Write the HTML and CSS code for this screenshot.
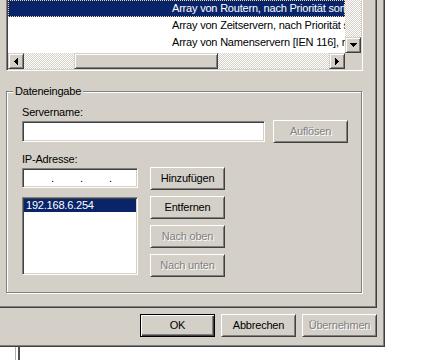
FILE: index.html
```html
<!DOCTYPE html>
<html>
<head>
    <title>Optionen</title>
    <link rel="stylesheet" href="styles.css">
</head>
<body>
    <div class="dialog">
        <div class="page">
            <div class="listview">
                <div class="lv-body">
                    <div class="lv-rows">
                        <div class="lv-row selected"><span>Array von Routern, nach Priorität sortiert</span></div>
                        <div class="lv-row"><span>Array von Zeitservern, nach Priorität sortiert</span></div>
                        <div class="lv-row"><span>Array von Namenservern [IEN 116], nach Priorität sortiert</span></div>
                    </div>
                    <div class="vscroll">
                        <div class="sb-track"></div>
                        <div class="sb-btn">
                            <svg width="7" height="4" viewBox="0 0 7 4"><path d="M0 0h7v1h-7zM1 1h5v1h-5zM2 2h3v1h-3zM3 3h1v1h-1z"/></svg>
                        </div>
                    </div>
                </div>
                <div class="hscroll">
                    <div class="sb-btn">
                        <svg width="4" height="7" viewBox="0 0 4 7"><path d="M3 0h1v7h-1zM2 1h1v5h-1zM1 2h1v3h-1zM0 3h1v1h-1z"/></svg>
                    </div>
                    <div class="sb-track lead"></div>
                    <div class="sb-thumb"></div>
                    <div class="sb-track rest"></div>
                    <div class="sb-btn">
                        <svg width="4" height="7" viewBox="0 0 4 7"><path d="M0 0h1v7h-1zM1 1h1v5h-1zM2 2h1v3h-1zM3 3h1v1h-1z"/></svg>
                    </div>
                    <div class="sb-corner"></div>
                </div>
            </div>

            <div class="group">
                <span class="group-title">Dateneingabe</span>
                <div class="label">Servername:</div>
                <div class="server-row">
                    <div class="field server"></div>
                    <div class="btn disabled">Auflösen</div>
                </div>
                <div class="label ip-label">IP-Adresse:</div>
                <div class="ip-block">
                    <div class="ip-col">
                        <div class="field ip">
                            <span>.</span><span>.</span><span>.</span>
                        </div>
                        <div class="field listbox">
                            <div class="lb-item selected">192.168.6.254</div>
                        </div>
                    </div>
                    <div class="btn-col">
                        <div class="btn">Hinzufügen</div>
                        <div class="btn">Entfernen</div>
                        <div class="btn disabled">Nach oben</div>
                        <div class="btn disabled">Nach unten</div>
                    </div>
                </div>
            </div>
        </div>

        <div class="actions">
            <div class="btn default">OK</div>
            <div class="btn">Abbrechen</div>
            <div class="btn disabled">Übernehmen</div>
        </div>
    </div>
    <div class="behind">
        <div class="edge"></div>
    </div>
</body>
</html>
```

FILE: styles.css
```css
* {
    box-sizing: border-box;
}
body {
    margin: 0;
    height: 362px;
    overflow: hidden;
    background-color: #fff;
    font: 11px/13px "Liberation Sans", Tahoma, Arial, sans-serif;
    letter-spacing: -0.2px;
    color: #000;
}

/* window frame */
.dialog {
    width: 385px;
    height: 349px;
    background-color: #D4D0C8;
    border-right: 1px solid #404040;
    border-bottom: 1px solid #404040;
    box-shadow: inset -1px -1px #808080;
}
.page {
    width: 377px;
    height: 310px;
    padding-left: 6px;
    border-right: 1px solid #404040;
    border-bottom: 1px solid #404040;
    box-shadow: inset -1px -1px #808080;
}

/* list view */
.listview {
    width: 357px;
    height: 73px;
    margin-top: -2px;
    padding: 1px;
    border: 1px solid;
    border-color: #808080 #fff #fff #808080;
    box-shadow: inset 1px 1px #404040, inset -1px -1px #D4D0C8;
    background-color: #fff;
}
.lv-body {
    display: flex;
    height: 53px;
}
.lv-rows {
    flex: 1;
    overflow: hidden;
}
.lv-row {
    height: 17px;
    line-height: 17px;
    padding-left: 164px;
    white-space: nowrap;
}
.lv-row.selected {
    background-color: #0A246A;
    color: #fff;
    outline: 1px dotted #F5DB95;
    outline-offset: -1px;
}
.vscroll {
    width: 16px;
    display: flex;
    flex-direction: column;
}
.vscroll .sb-track {
    flex: 1;
}
.hscroll {
    display: flex;
    height: 16px;
}
.sb-track {
    background: repeating-conic-gradient(#fff 0 25%, #D4D0C8 0 50%) 0 0 / 2px 2px;
}
.sb-track.lead {
    width: 50px;
}
.sb-track.rest {
    flex: 1;
}
.sb-btn, .sb-thumb {
    height: 16px;
    background-color: #D4D0C8;
    border: 1px solid;
    border-color: #D4D0C8 #404040 #404040 #D4D0C8;
    box-shadow: inset 1px 1px #fff, inset -1px -1px #808080;
}
.sb-btn {
    width: 16px;
    display: flex;
    align-items: center;
    justify-content: center;
}
.sb-btn svg {
    display: block;
    shape-rendering: crispEdges;
}
.sb-thumb {
    width: 144px;
}
.sb-corner {
    width: 16px;
    background-color: #D4D0C8;
}

/* group box */
.group {
    position: relative;
    width: 356px;
    height: 202px;
    margin-top: 20px;
    padding: 14px 0 0 15px;
    border: 1px solid #808080;
    box-shadow: inset 1px 1px #fff, 1px 1px #fff;
}
.group-title {
    position: absolute;
    top: -7px;
    left: 6px;
    padding: 0 2px;
    background-color: #D4D0C8;
}
.label {
    height: 13px;
}
.server-row {
    display: flex;
    align-items: center;
    gap: 8px;
    margin-top: 1px;
}
.ip-label {
    margin-top: 10px;
}
.ip-block {
    display: flex;
    gap: 12px;
    margin-top: 1px;
}
.ip-col {
    width: 116px;
    padding-top: 1px;
}
.btn-col {
    display: flex;
    flex-direction: column;
    gap: 6px;
}

/* sunken fields */
.field {
    padding: 1px;
    border: 1px solid;
    border-color: #808080 #fff #fff #808080;
    box-shadow: inset 1px 1px #404040, inset -1px -1px #D4D0C8;
    background-color: #fff;
}
.server {
    width: 243px;
    height: 21px;
}
.ip {
    display: flex;
    align-items: center;
    gap: 26px;
    height: 20px;
    padding-left: 28px;
    padding-top: 2px;
}
.ip span {
    width: 3px;
}
.listbox {
    height: 78px;
    margin-top: 9px;
}
.lb-item {
    padding-left: 2px;
}
.lb-item.selected {
    background-color: #0A246A;
    color: #fff;
}

/* push buttons */
.btn {
    width: 75px;
    height: 23px;
    padding-bottom: 1px;
    display: flex;
    align-items: center;
    justify-content: center;
    border: 1px solid;
    border-color: #fff #404040 #404040 #fff;
    box-shadow: inset 1px 1px #D4D0C8, inset -1px -1px #808080;
}
.btn.default {
    border-color: #000;
    box-shadow: inset 1px 1px #fff, inset -1px -1px #404040, inset -2px -2px #808080;
}
.btn.disabled {
    color: #808080;
    text-shadow: 1px 1px #fff;
}
.actions {
    display: flex;
    justify-content: flex-end;
    gap: 6px;
    margin-top: 6px;
    padding-right: 7px;
}

/* window behind the dialog */
.behind {
    height: 13px;
    padding-left: 15px;
}
.edge {
    width: 5px;
    height: 100%;
    border-left: 1px solid #B0B0B0;
    border-right: 2px solid #505050;
}
```
